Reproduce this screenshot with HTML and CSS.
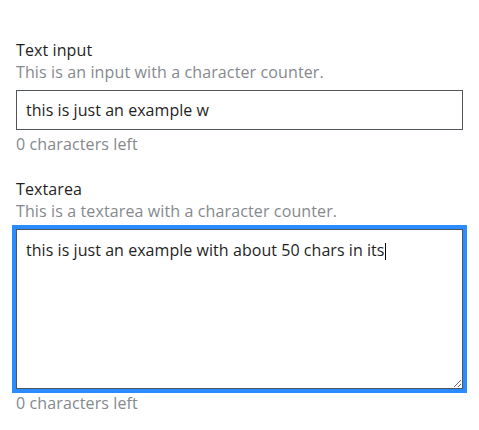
FILE: index.html
```html
<!DOCTYPE html>
<html lang="en">
<head>
<meta charset="utf-8">
<title>Character counter</title>
<link rel="stylesheet" href="styles.css">
</head>
<body>
<div class="form">
  <div class="field">
    <label class="label" for="t1">Text input</label>
    <div class="hint">This is an input with a character counter.</div>
    <input id="t1" class="control input" type="text" value="this is just an example w">
    <div class="counter">0 characters left</div>
  </div>
  <div class="field">
    <label class="label" for="t2">Textarea</label>
    <div class="hint">This is a textarea with a character counter.</div>
    <div class="area-wrap">
      <textarea id="t2" class="control area focused">this is just an example with about 50 chars in its</textarea>
      <span class="caret"></span>
    </div>
    <div class="counter">0 characters left</div>
  </div>
</div>
</body>
</html>
```

FILE: styles.css
```css
* { box-sizing: border-box; }
html, body { margin: 0; background: #fff; }
body {
  font-family: "Open Sans", "Noto Sans", sans-serif;
  font-size: 16px;
  line-height: 22px;
  color: #1f1f1f;
}
.form {
  padding: 39px 16px 0 16px;
  display: flex;
  flex-direction: column;
  gap: 23px;
}
.field {
  display: flex;
  flex-direction: column;
  width: 447px;
}
.label { display: block; color: #1f1f1f; letter-spacing: 0.1px; }
.hint { color: #85898e; letter-spacing: 0.12px; }
.control {
  margin-top: 7px;
  font-family: inherit;
  font-size: 16px;
  line-height: 22px;
  letter-spacing: 0.05px;
  color: #1f1f1f;
  border: 1px solid #50555c;
  border-radius: 0;
  background: #fff;
  padding: 8px 9px;
  width: 100%;
}
.input { height: 40px; outline: none; }
.area-wrap { position: relative; }
.area {
  height: 160px;
  resize: vertical;
  display: block;
  padding: 9px 9px;
}
.focused, .area:focus { outline: 4px solid #2a8cff; outline-offset: 0; }
.caret {
  position: absolute;
  left: 369px;
  top: 21px;
  width: 1px;
  height: 17px;
  background: #000;
}
.counter { color: #85898e; margin-top: 3px; letter-spacing: 0.12px; }
```
